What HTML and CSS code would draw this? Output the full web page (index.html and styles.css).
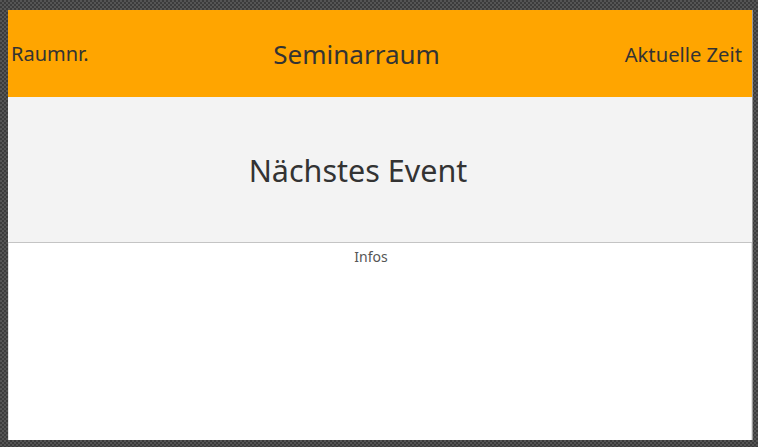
FILE: index.html
```html
<!DOCTYPE html>
<html lang="de">
<head>
<meta charset="utf-8">
<title>Seminarraum</title>
<link rel="stylesheet" href="styles.css">
</head>
<body>
<div class="screen">
  <header class="topbar">
    <span class="room-no">Raumnr.</span>
    <span class="room-name">Seminarraum</span>
    <span class="clock">Aktuelle Zeit</span>
  </header>
  <section class="next">
    <h1 class="next-title">Nächstes Event</h1>
  </section>
  <section class="infos">
    <p class="infos-label">Infos</p>
  </section>
</div>
</body>
</html>
```
FILE: styles.css
```css
html, body {
  margin: 0;
  height: 100%;
}
body {
  background-color: #464646;
  background-image: repeating-conic-gradient(#3c3c3c 0 25%, #555555 0 50%);
  background-size: 4px 4px;
  padding: 10px 6px 7px 8px;
  box-sizing: border-box;
  font-family: "Noto Sans", "Open Sans", sans-serif;
  color: #333333;
}
.screen {
  width: 744px;
  height: 430px;
  display: flex;
  flex-direction: column;
  background: #ffffff;
  box-shadow: 1px 0 0 #9a9a9a;
}
.topbar {
  height: 87px;
  flex: none;
  display: flex;
  align-items: center;
  justify-content: space-between;
  padding: 0 10px 0 3px;
  background: #ffa500;
}
.room-no {
  font-size: 20px;
}
.room-name {
  font-size: 26px;
}
.clock {
  font-size: 20.2px;
}
.next {
  height: 146px;
  flex: none;
  display: flex;
  align-items: center;
  justify-content: center;
  padding: 0 44px 0 0;
  background: #f3f3f3;
  border-bottom: 1px solid #c4c4c4;
  box-sizing: border-box;
}
.next-title {
  margin: 0;
  font-weight: normal;
  font-size: 30.5px;
}
.infos {
  flex: 1;
  display: flex;
  justify-content: center;
  padding-right: 18px;
  border-left: 1px solid #e2e2e2;
  border-right: 1px solid #e2e2e2;
}
.infos-label {
  margin: 4px 0 0;
  font-size: 14px;
  color: #555555;
}
```
